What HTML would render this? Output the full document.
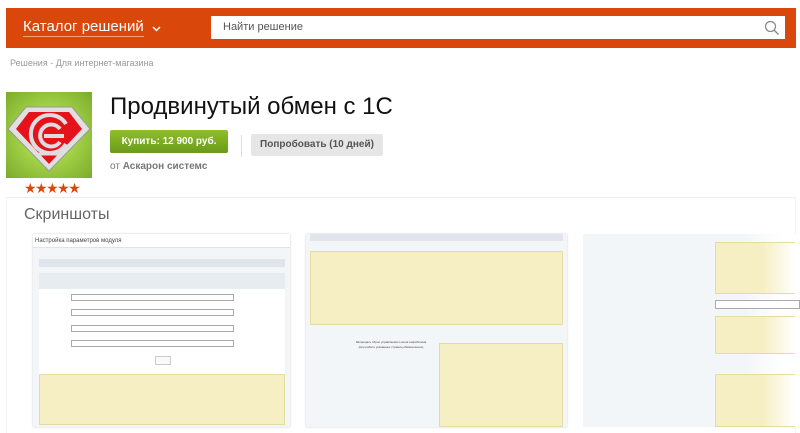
<!DOCTYPE html>
<html><head><meta charset="utf-8"><style>
*{margin:0;padding:0;box-sizing:border-box}
body{width:800px;height:433px;overflow:hidden;background:#fff;font-family:"Liberation Sans",sans-serif;position:relative}
.a{position:absolute}
.t{font-size:3px;color:#777;line-height:5px}
.y{background:#f7efc4;border:1px solid #e6dba0}
</style></head><body>
<div class="a" style="left:6px;top:8px;width:790px;height:40px;background:#d9480a"></div>
<div class="a" style="left:23px;top:17px;color:#fff;font-size:15px;border-bottom:1px solid #f3a27a;line-height:19px">Каталог решений</div>
<svg class="a" style="left:152px;top:26px" width="9" height="6" viewBox="0 0 9 6"><path d="M1 1l3.5 3.5L8 1" fill="none" stroke="#fff" stroke-width="1.4"/></svg>
<div class="a" style="left:211px;top:16px;width:574px;height:23px;background:#fff"></div>
<div class="a" style="left:223px;top:21px;font-size:11px;color:#555">Найти решение</div>
<svg class="a" style="left:764px;top:20px" width="16" height="16" viewBox="0 0 16 16"><circle cx="6.5" cy="6.5" r="5" fill="none" stroke="#888" stroke-width="1.2"/><path d="M10 10l4.5 4.5" stroke="#888" stroke-width="1.3"/></svg>
<div class="a" style="left:10px;top:58px;font-size:9px;color:#999">Решения - Для интернет-магазина</div>
<div class="a" style="left:6px;top:92px;width:86px;height:86px;background:radial-gradient(circle,#b3e052 25%,#7aab2b 100%)"></div>
<svg class="a" style="left:6px;top:92px" width="86" height="86" viewBox="0 0 86 86"><path d="M20 15h46l18 22-41 42L2 37z" fill="#e0e0e0" stroke="#999"/><path d="M23 20h40l13 17-33 35-33-35z" fill="#e5111b"/><path d="M60 52A19 19 0 1 1 60 32" fill="none" stroke="#ddd" stroke-width="4"/><path d="M54 50A11 11 0 1 1 54 37" fill="none" stroke="#ddd" stroke-width="4"/><path d="M38 44h20" stroke="#ddd" stroke-width="4"/><path d="M30 62h26" stroke="#ddd" stroke-width="3"/></svg>
<div class="a" style="left:24px;top:180px;font-size:14px;color:#d9480a;letter-spacing:-1.5px">★★★★★</div>
<div class="a" style="left:110px;top:93px;font-size:24px;color:#111">Продвинутый обмен с 1С</div>
<div class="a" style="left:110px;top:130px;width:118px;height:23px;background:linear-gradient(#8fbf2a,#6a9b1a);border-radius:2px;color:#fff;font-size:10px;font-weight:bold;text-align:center;line-height:23px">Купить: 12 900 руб.</div>
<div class="a" style="left:241px;top:135px;width:1px;height:22px;background:#ddd"></div>
<div class="a" style="left:251px;top:134px;width:132px;height:22px;background:#e6e6e6;border-radius:2px;color:#555;font-size:10px;font-weight:bold;text-align:center;line-height:22px">Попробовать (10 дней)</div>
<div class="a" style="left:110px;top:161px;font-size:10px;color:#777">от <b>Аскарон системс</b></div>
<div class="a" style="left:6px;top:197px;width:790px;height:236px;border-top:1px solid #eee;border-left:1px solid #f2f2f2;border-right:1px solid #f2f2f2"></div>
<div class="a" style="left:24px;top:206px;font-size:16px;color:#666">Скриншоты</div>
<div class="a" style="left:33px;top:234px;width:257px;height:193px;background:#f3f6f8;box-shadow:0 0 2px #ccc">
 <div class="a" style="left:0;top:0;width:257px;height:14px;background:#fff;font-size:6px;color:#444;padding:4px 2px;border-bottom:1px solid #e3e3e3">Настройка параметров модуля</div>
 <div class="a" style="left:6px;top:25px;width:246px;height:8px;background:#dfe5ea"></div>
 <div class="a" style="left:6px;top:39px;width:246px;height:112px;background:#fff"></div>
 <div class="a" style="left:6px;top:39px;width:246px;height:16px;background:#e6ecef"></div>
 <div class="a" style="left:38px;top:60px;width:163px;height:7px;border:1px solid #aaa;background:#fff"></div>
 <div class="a" style="left:38px;top:75px;width:163px;height:7px;border:1px solid #aaa;background:#fff"></div>
 <div class="a" style="left:38px;top:91px;width:163px;height:7px;border:1px solid #aaa;background:#fff"></div>
 <div class="a" style="left:38px;top:106px;width:163px;height:7px;border:1px solid #aaa;background:#fff"></div>
 <div class="a" style="left:122px;top:122px;width:16px;height:9px;border:1px solid #ccc;background:#fafafa"></div>
 <div class="a y" style="left:6px;top:140px;width:246px;height:51px"></div>
</div>
<div class="a" style="left:306px;top:234px;width:261px;height:193px;background:#f3f6f8;box-shadow:0 0 2px #ccc">
 <div class="a" style="left:4px;top:0;width:253px;height:7px;background:#dfe5ea"></div>
 <div class="a y" style="left:4px;top:17px;width:253px;height:74px"></div>
 <div class="a t" style="left:10px;top:106px;width:150px;text-align:center;color:#444">Запрещать сброс управляемого кеша инфоблоков<br>(при работе указанных страниц обмена выше)</div>
 <div class="a y" style="left:133px;top:109px;width:124px;height:84px"></div>
</div>
<div class="a" style="left:583px;top:234px;width:217px;height:193px;background:linear-gradient(90deg,#f3f6f8 75%,#fff 92%)">
 <div class="a y" style="left:132px;top:8px;width:80px;height:52px;border-right:none;background:linear-gradient(90deg,#f7efc4 60%,#fff)"></div>
 <div class="a" style="left:132px;top:66px;width:85px;height:9px;border:1px solid #aaa;background:#fff"></div>
 <div class="a y" style="left:132px;top:82px;width:80px;height:38px;border-right:none;background:linear-gradient(90deg,#f7efc4 60%,#fff)"></div>
 <div class="a y" style="left:132px;top:140px;width:80px;height:53px;border-right:none;background:linear-gradient(90deg,#f7efc4 60%,#fff)"></div>
</div>
</body></html>
